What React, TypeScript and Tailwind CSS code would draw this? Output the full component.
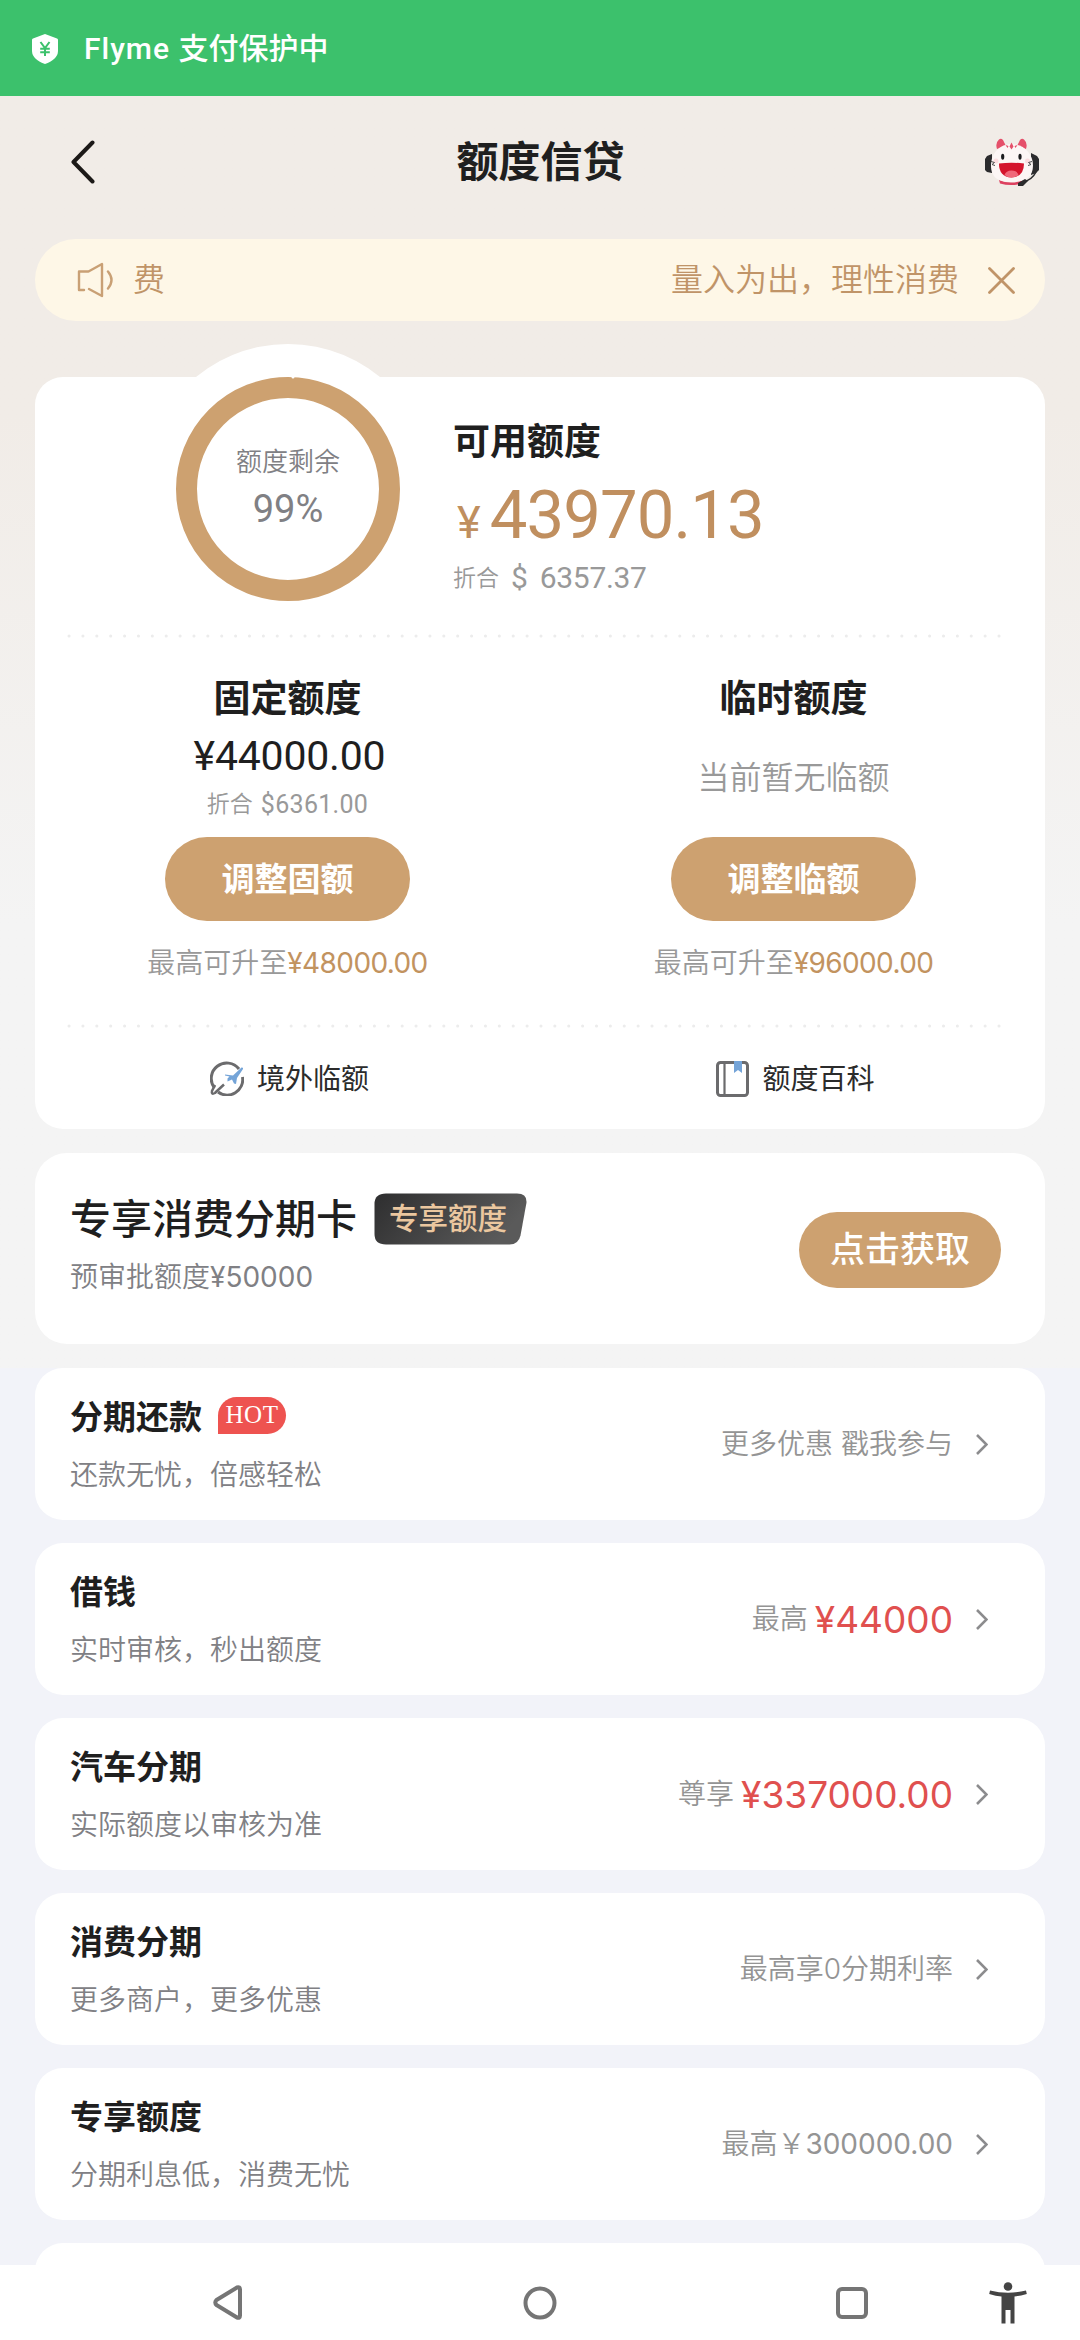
import React from "react";
import clsx from "clsx";

interface Product {
  title: string;
  desc: string;
  hot?: boolean;
  hint: string;
  limit?: string;
  amount?: string;
}

const products: Product[] = [
  { title: "分期还款", desc: "还款无忧，倍感轻松", hot: true, hint: "更多优惠 戳我参与" },
  { title: "借钱", desc: "实时审核，秒出额度", hint: "最高", amount: "¥44000" },
  { title: "汽车分期", desc: "实际额度以审核为准", hint: "尊享", amount: "¥337000.00" },
  { title: "消费分期", desc: "更多商户，更多优惠", hint: "最高享0分期利率" },
  { title: "专享额度", desc: "分期利息低，消费无忧", hint: "最高￥", limit: "300000.00" },
];

const ShieldIcon = () => (
  <svg width="26" height="30" viewBox="0 0 26 30">
    <path d="M13 0 25 4.500q1 .4 1 1.400V17c0 6-5.500 10.500-13 13C5.500 27.500 0 23 0 17V5.900Q0 4.900 1 4.500Z" fill="#fff" />
    <path d="M8.500 8 13 14l4.500-6M13 14v8M8.200 14.800h9.600M8.200 18.200h9.600" fill="none" stroke="#3cc16c" strokeWidth="2" />
  </svg>
);

const Mascot = () => (
  <svg width="56" height="48" viewBox="0 0 56 48">
    <path d="M8 16 3 18l-2 3v11l2 2 5 1z" fill="#2b2b2d" />
    <path d="M47 15l6 3 2 3v11l-3 3-5 2z" fill="#2b2b2d" />
    <path d="M52 34q-4 8-13 10" fill="none" stroke="#2b2b2d" strokeWidth="1.600" />
    <path d="M13 11Q11 5 15 1.500q2-1.500 4 .5l3 6zM42 11Q44 5 40 1.500q-2-1.500-4 .5l-3 6z" fill="#e5506a" />
    <path d="M15 42q12 5 24 0l-1 3.500q-11 3-22 0z" fill="#dd4160" />
    <path d="M27.500 6C39 6 49 15 49 27.500S40 44 27.500 44 7 40 7 27.500 16 6 27.500 6z" fill="#fcf6f5" />
    <path d="M27.500 4.500l2 4-2 3-2-3zM21.500 7l3 1-1 2zM33.500 7l-3 1 1 2z" fill="#e5506a" />
    <ellipse cx="18.700" cy="18.700" rx="1.600" ry="3" fill="#1c1c1e" />
    <ellipse cx="36" cy="18.700" rx="1.600" ry="3" fill="#1c1c1e" />
    <circle cx="12" cy="23" r="2.500" fill="#fbdcdf" />
    <circle cx="43.500" cy="23" r="2.500" fill="#fbdcdf" />
    <path d="M15 25.500q12.500-1.500 25 0Q40 39 27.500 39.500 15 39 15 25.500z" fill="#d4142c" />
    <path d="M20.500 37q1.500-4.500 7-4.500t7 4.500q-3 2.500-7 2.500t-7-2.500z" fill="#f0687a" />
    <path d="M7 23.500l3.500 1L8 26.500l3 1M48 23.500l-3.500 1 2.500 2-3 1" fill="none" stroke="#4a4a4a" strokeWidth="1" />
    <path d="M34 45l7-4 3 2-5 5h-5z" fill="#2b2b2d" />
  </svg>
);

const SpeakerIcon = () => (
  <svg width="38" height="36" viewBox="0 0 38 36" fill="none" stroke="#c9a075" strokeWidth="2.400" strokeLinecap="round" strokeLinejoin="round">
    <path d="M7 28H2V9.500h9.500L25 2v32l-13-7" />
    <path d="M31 9.500q7 8.500 0 17" />
  </svg>
);

const GlobeIcon = () => (
  <svg width="34" height="35" viewBox="0 0 34 35" fill="none" stroke="#6b6b6d" strokeWidth="3">
    <path d="M29 8A15 15 0 1 0 4.500 27" />
    <path d="M32.500 16A15.500 15.500 0 0 1 8 31" />
    <path d="M14 23.500Q8 29 5 32q-4 2-3-2l3-6" strokeWidth="2.500" />
    <path d="M15 13.500l8 1 8.500-8q2-.5 1.500 1.500L27 17l-1 6-2-.5-2-4-4.500 2v-3l2-2-4.500-1z" fill="#74a4d8" stroke="none" />
  </svg>
);

const BookIcon = () => (
  <svg width="33" height="36" viewBox="0 0 33 36" fill="none" stroke="#6b6b6d">
    <rect x="1.500" y="1.500" width="30" height="33" rx="3" strokeWidth="3" />
    <path d="M8.500 2v32" strokeWidth="2.200" />
    <path d="M18 0h8v12l-4-3-4 3z" fill="#74a4d8" stroke="none" />
  </svg>
);

const Dots = () => (
  <svg width="934" height="4" className="ml-8">
    <line x1="2" y1="2" x2="934" y2="2" stroke="#ececec" strokeWidth="3" strokeLinecap="round" strokeDasharray="0.1 13.78" />
  </svg>
);

const PillButton = ({ children, className }: { children: React.ReactNode; className?: string }) => (
  <button className={clsx("flex items-center justify-center rounded-full bg-[#cda170] text-white", className)}>
    {children}
  </button>
);

const MaxLimit = ({ amount }: { amount: string }) => (
  <p className="mt-[22px] flex h-10 items-center text-[28px] text-[#999]">
    最高可升至<span className="font-normal tracking-[-0.600px] text-[#c2935f]">{amount}</span>
  </p>
);

const ProductRow = ({ item }: { item: Product }) => (
  <div className="flex h-[152px] shrink-0 items-center justify-between rounded-[28px] bg-white pr-[57px] pl-[35px]">
    <div className="pt-1">
      <div className="flex h-[50px] items-center">
        <h3 className="text-[33px] font-bold text-[#1f1f1f]">{item.title}</h3>
        {item.hot && (
          <span className="mb-1 ml-4 flex h-[37px] w-[68px] items-center justify-center rounded-full rounded-bl-none bg-[#ee5350] pb-0.5 font-['Liberation_Serif',serif] text-[25px] font-medium tracking-[0.500px] text-white">
            HOT
          </span>
        )}
      </div>
      <p className="mt-2 h-[50px] text-[28px] leading-[50px] text-[#808084]">{item.desc}</p>
    </div>
    <div className="flex items-center">
      <span className="text-[28px] text-[#949494]">
        {item.hint}
        {item.limit && <span className="font-normal">{item.limit}</span>}
      </span>
      {item.amount && <span className="ml-[7px] text-[37px] font-normal text-[#e0504f]">{item.amount}</span>}
      <svg width="12" height="21" viewBox="0 0 12 21" className="ml-[23px]" fill="none" stroke="#8c8c8e" strokeWidth="2.600">
        <path d="M1 1l9.500 9.500L1 20" />
      </svg>
    </div>
  </div>
);

const App = () => {
  return (
    <div className="flex h-[2340px] w-[1080px] flex-col overflow-hidden bg-[#f2f3f9] font-['Inter','Noto_Sans_CJK_SC',sans-serif] leading-none font-[350]">
      <div className="flex h-24 shrink-0 items-center bg-[#3cc16c] pt-0.5 pl-8 text-white">
        <ShieldIcon />
        <span className="ml-[26px] font-['Roboto','Noto_Sans_CJK_SC',sans-serif] text-[30px] font-medium">
          <span className="tracking-[1px]">Flyme </span>支付保护中
        </span>
      </div>

      <div className="flex h-[1272px] shrink-0 flex-col bg-linear-to-b from-[#f1ece7] from-25% to-[#f4f4f4] to-65% px-[35px]">
        <header className="flex h-[132px] items-center justify-between pr-[5px] pl-9">
          <svg width="56" height="44" viewBox="0 0 56 44" fill="none" stroke="#1c1917" strokeWidth="4" strokeLinecap="round" strokeLinejoin="round">
            <path d="M21.500 2.500 2.500 22l19 19.500" />
          </svg>
          <h1 className="mr-[30px] ml-auto text-[42px] font-bold text-[#1f1f1f]">额度信贷</h1>
          <div className="ml-auto">
            <Mascot />
          </div>
        </header>

        <div className="mt-[11px] flex h-[82px] items-center rounded-full bg-[#fef7e7] pr-[30px] pl-[42px] text-[32px] text-[#c09468]">
          <SpeakerIcon />
          <span className="ml-[18px]">费</span>
          <span className="ml-auto">量入为出，理性消费</span>
          <svg width="27" height="27" viewBox="0 0 27 27" className="ml-[29px]" stroke="#c09468" strokeWidth="2.800" strokeLinecap="round">
            <path d="M1.500 1.500l24 24M25.500 1.500l-24 24" />
          </svg>
        </div>

        <section className="relative mt-14 flex h-[752px] flex-col rounded-[28px] bg-white">
          <div className="absolute -top-[33px] left-[108px] size-[290px] rounded-full bg-white" />
          <div className="relative flex h-[257px]">
            <div className="relative ml-[141px] size-[224px]">
              <svg width="224" height="224" viewBox="0 0 224 224">
                <circle cx="112" cy="112" r="101.500" fill="none" stroke="#cda170" strokeWidth="21" />
                <circle cx="117" cy="0" r="1.500" fill="#fff" />
              </svg>
              <div className="absolute inset-0 flex flex-col items-center pt-[70px] text-[#808084]">
                <span className="text-[26px] leading-[30px]">额度剩余</span>
                <span className="mt-3 font-['Roboto'] text-[38px] leading-10 font-normal">99%</span>
              </div>
            </div>
            <div className="ml-[53px] pt-[45px]">
              <h2 className="text-[37px] leading-10 font-bold text-[#1f1f1f]">可用额度</h2>
              <div className="mt-[17px] flex items-baseline pl-1 font-['Roboto'] font-normal text-[#c08f5f]">
                <span className="text-[45px] leading-[72px]">¥</span>
                <span className="ml-[9px] text-[67px] leading-[72px] tracking-[-0.900px]">43970.13</span>
              </div>
              <p className="mt-1 flex items-center font-['Roboto','Noto_Sans_CJK_SC'] text-[#999]">
                <span className="text-[23px]">折合</span>
                <span className="ml-3 text-[30px] font-normal tracking-[-0.300px] [word-spacing:5px]">$ 6357.37</span>
              </p>
            </div>
          </div>
          <Dots />
          <div className="grid h-[386px] grid-cols-2 pt-10">
            <div className="flex flex-col items-center">
              <h2 className="text-[37px] leading-[42px] font-bold text-[#1f1f1f]">固定额度</h2>
              <p className="mt-3 pl-1 font-['Roboto'] text-[41px] leading-[48px] font-normal tracking-[-0.200px] text-[#1f1f1f]">¥44000.00</p>
              <p className="mt-2 flex h-8 items-center font-['Roboto','Noto_Sans_CJK_SC'] text-[#999]">
                <span className="text-[23px]">折合</span>
                <span className="ml-2 text-[25px] font-normal tracking-[0.300px]">$6361.00</span>
              </p>
              <PillButton className="mt-[17px] h-[84px] w-[245px] text-[33px] font-bold">调整固额</PillButton>
              <MaxLimit amount="¥48000.00" />
            </div>
            <div className="flex flex-col items-center pl-0.5">
              <h2 className="text-[37px] leading-[42px] font-bold text-[#1f1f1f]">临时额度</h2>
              <p className="mt-[33px] h-[84px] text-[32px] leading-[50px] text-[#999]">当前暂无临额</p>
              <PillButton className="h-[84px] w-[245px] text-[33px] font-bold">调整临额</PillButton>
              <MaxLimit amount="¥96000.00" />
            </div>
          </div>
          <Dots />
          <div className="grid h-[101px] grid-cols-2 text-[28px] font-normal text-[#2b2b2b]">
            <div className="flex items-center justify-center gap-[13px] pl-1">
              <GlobeIcon />
              境外临额
            </div>
            <div className="flex items-center justify-center gap-[13px] pl-1.5">
              <BookIcon />
              额度百科
            </div>
          </div>
        </section>

        <section className="mt-6 flex h-[191px] items-center justify-between rounded-[32px] bg-white pr-11 pl-[35px]">
          <div className="pb-[7px]">
            <div className="flex h-[52px] items-center">
              <h2 className="text-[41px] font-medium text-[#1f1f1f]">专享消费分期卡</h2>
              <div className="relative ml-[17px] h-[52px] w-[153px]">
                <svg width="153" height="52" viewBox="0 0 153 52" className="absolute inset-0">
                  <defs>
                    <linearGradient id="tag" x1="0" y1="0" x2="1" y2="0.300">
                      <stop offset="0" stopColor="#2e2e2f" />
                      <stop offset="1" stopColor="#5a5a5a" />
                    </linearGradient>
                  </defs>
                  <path d="M12 .5h131q10 0 9.500 9l-6 33q-2 9-11 9H12Q.5 51.500.5 41V11Q.5.5 12 .5z" fill="url(#tag)" />
                </svg>
                <span className="relative flex h-full items-center pl-[15px] text-[29.500px] font-medium text-[#ebc79f]">专享额度</span>
              </div>
            </div>
            <p className="mt-3 h-10 text-[28px] leading-10 text-[#808084]">
              预审批额度<span className="font-normal">¥50000</span>
            </p>
          </div>
          <PillButton className="mt-0.5 h-[76px] w-[202px] text-[35px] font-medium">点击获取</PillButton>
        </section>
      </div>

      <div className="flex h-[897px] shrink-0 flex-col gap-[23px] overflow-hidden px-[35px]">
        {products.map((item) => (
          <ProductRow key={item.title} item={item} />
        ))}
        <div className="h-[152px] shrink-0 rounded-[28px] bg-white" />
      </div>

      <nav className="flex h-[75px] shrink-0 items-center bg-white pr-[53px] pl-[213px] text-[#757575]">
        <svg width="30" height="35" viewBox="0 0 30 35" fill="none" stroke="currentColor" strokeWidth="4" strokeLinejoin="round">
          <path d="M24 2.500 3.500 15q-2.500 2.500 0 5L24 32.500q3 1 3-2v-26q0-3-3-2z" />
        </svg>
        <svg width="34" height="34" viewBox="0 0 34 34" className="ml-[280px]" fill="none" stroke="currentColor" strokeWidth="4">
          <circle cx="17" cy="17" r="14.500" />
        </svg>
        <svg width="32" height="32" viewBox="0 0 32 32" className="ml-[279px]" fill="none" stroke="currentColor" strokeWidth="4">
          <rect x="2" y="2" width="28" height="28" rx="4" />
        </svg>
        <svg width="38" height="42" viewBox="0 0 38 42" className="ml-auto" fill="#444">
          <circle cx="19" cy="4.500" r="4.300" />
          <path d="M1 8.500Q19 13 37 8.500l.8 3.500Q31 14 25.500 14.500V41.500h-4V28h-5v13.500h-4v-27Q7 14 .2 12z" />
        </svg>
      </nav>
    </div>
  );
};

export default App;
